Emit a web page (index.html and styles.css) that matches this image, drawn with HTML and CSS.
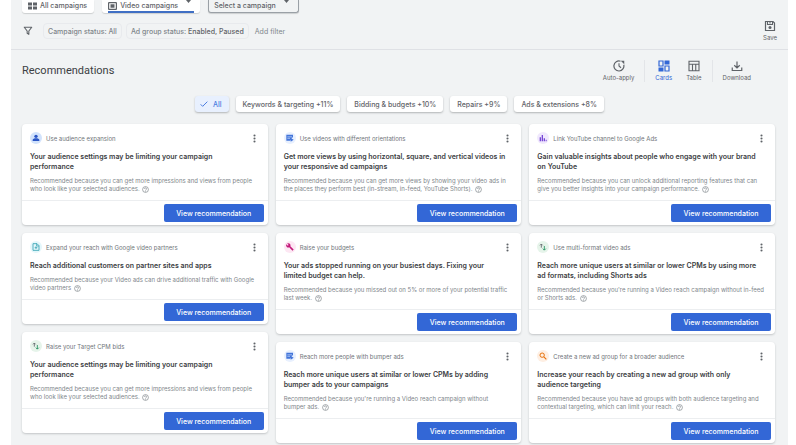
FILE: index.html
```
<!DOCTYPE html>
<html lang="en">
<head>
  <meta charset="UTF-8">
  <meta name="viewport" content="width=device-width, initial-scale=1.0">
  <title>Recommendations</title>
  <link rel="stylesheet" href="styles.css">
</head>
<body>
  <!-- Shared icons -->
  <svg class="sprite" aria-hidden="true">
    <symbol id="i-more" viewBox="0 0 24 24"><circle cx="12" cy="4" r="2.8"/><circle cx="12" cy="12" r="2.8"/><circle cx="12" cy="20" r="2.8"/></symbol>
    <symbol id="i-help" viewBox="0 0 24 24"><g fill="none" stroke="currentColor" stroke-width="2.4"><circle cx="12" cy="12" r="10"/><path d="M8.5 10a3.5 3.5 0 1 1 5.2 3c-1.2.7-1.7 1.2-1.7 2.3"/></g><circle cx="12" cy="17.8" r="1.5"/></symbol>
    <symbol id="i-video" viewBox="0 0 24 24"><path d="M1 2h20v9.5l-2.5-1.5-5.5 10H1z"/><path d="M4 8.5h14M4 13h8" stroke="#d2e3fc" stroke-width="2"/><path d="M14 12l9 5.5-9 5.5z"/></symbol>
    <symbol id="i-bids" viewBox="0 0 24 24"><path d="M7 14V3M3 7l4-4 4 4" fill="none" stroke="#5f6368" stroke-width="2.5"/><path d="M16 9v12M11.5 17l4.5 4.5 4.5-4.5" fill="none" stroke="#1e8e5a" stroke-width="2.5"/></symbol>
  </svg>

  <main class="panel">
    <nav class="tabs" aria-label="Campaigns">
      <button class="tab">
        <svg class="tab-icon" viewBox="0 0 18 16"><path d="M0 1h8v6H0zM10 1h8v6h-8zM0 9h8v6H0zM10 9h8v6h-8z"/></svg>
        All campaigns
      </button>
      <button class="tab tab-active">
        <svg class="tab-icon" viewBox="0 0 18 16"><rect x="1.2" y="1.2" width="15.6" height="13.6" rx="1" fill="none" stroke="currentColor" stroke-width="2.4"/><path d="M5 4.5h8v7H5z"/></svg>
        Video campaigns
        <svg class="tab-arrow" viewBox="0 0 10 6"><path d="M0 0h10L5 6z"/></svg>
      </button>
      <div class="picker">
        <select aria-label="Select a campaign">
          <option>Select a campaign</option>
        </select>
        <svg class="tab-arrow" viewBox="0 0 10 6"><path d="M0 0h10L5 6z"/></svg>
      </div>
    </nav>

    <div class="filters">
      <svg class="filter-icon" viewBox="0 0 24 24"><path d="M3 3h18l-7 9v8l-4-2.5V12z" fill="none" stroke="currentColor" stroke-width="2.6" stroke-linejoin="round"/></svg>
      <button class="filter">Campaign status: All</button>
      <button class="filter">Ad group status: <span>Enabled, Paused</span></button>
      <button class="add-filter">Add filter</button>
      <button class="tool save">
        <svg viewBox="0 0 24 24"><path d="M3 3h15l3 3v15H3z" fill="none" stroke="currentColor" stroke-width="2.4"/><path d="M7 3v6h10V3M12 3v4" fill="none" stroke="currentColor" stroke-width="2.2"/><circle cx="12" cy="15" r="3"/></svg>
        Save
      </button>
    </div>

    <header class="toolbar">
      <h1>Recommendations</h1>
      <div class="tools">
        <button class="tool">
          <svg viewBox="0 0 24 24"><path d="M15 2.5A10 10 0 1 0 21.5 9.5" fill="none" stroke="currentColor" stroke-width="2.4"/><path d="M12 6.5V12l4 3.5" fill="none" stroke="currentColor" stroke-width="2.2"/><path d="M15.5 1.5h7v7z"/></svg>
          Auto-apply
        </button>
        <span class="separator"></span>
        <button class="tool tool-active">
          <svg viewBox="0 0 24 24"><path d="M2 2h8v10H2zM14 12h8v10h-8z" fill="none" stroke="currentColor" stroke-width="2.4"/><path d="M13 1h10v8H13zM1 15h10v8H1z"/></svg>
          Cards
        </button>
        <button class="tool">
          <svg viewBox="0 0 24 24"><path d="M2 2.5h20v19H2zM2 8.5h20M9 8.5v13M15.5 8.5v13" fill="none" stroke="currentColor" stroke-width="2.2"/></svg>
          Table
        </button>
        <span class="separator"></span>
        <button class="tool">
          <svg viewBox="0 0 24 24"><path d="M12 3v13M6.5 10.5 12 16l5.5-5.5M2.5 15v6h19v-6" fill="none" stroke="currentColor" stroke-width="2.4"/></svg>
          Download
        </button>
      </div>
    </header>

    <div class="chips">
      <button class="chip chip-active">
        <svg viewBox="0 0 24 24"><path d="M2 13l6 6L22 5" fill="none" stroke="currentColor" stroke-width="3"/></svg>
        All
      </button>
      <button class="chip">Keywords &amp; targeting +11%</button>
      <button class="chip">Bidding &amp; budgets +10%</button>
      <button class="chip">Repairs +9%</button>
      <button class="chip">Ads &amp; extensions +8%</button>
    </div>

    <section class="cards">
      <div class="column">
        <article class="card">
          <div class="card-head">
            <span class="badge blue"><svg viewBox="0 0 24 24"><circle cx="12" cy="7" r="5"/><path d="M2 21v-3c0-3 5-5 10-5s10 2 10 5v3z"/></svg></span>
            <span class="card-name">Use audience expansion</span>
            <button class="more" aria-label="More options"><svg viewBox="0 0 24 24"><use href="#i-more"/></svg></button>
          </div>
          <h2>Your audience settings may be limiting your campaign performance</h2>
          <p>Recommended because you can get more impressions and views from people who look like your selected audiences. <svg class="help" viewBox="0 0 24 24"><use href="#i-help"/></svg></p>
          <div class="card-foot"><button class="view">View recommendation</button></div>
        </article>

        <article class="card">
          <div class="card-head">
            <span class="badge teal"><svg viewBox="0 0 24 24"><path d="M3 2h12l6 6v14H3z" fill="none" stroke="currentColor" stroke-width="2.6"/><path d="M14 2v7h7M12 10v8M8 14h8" fill="none" stroke="currentColor" stroke-width="2.4"/></svg></span>
            <span class="card-name">Expand your reach with Google video partners</span>
            <button class="more" aria-label="More options"><svg viewBox="0 0 24 24"><use href="#i-more"/></svg></button>
          </div>
          <h2>Reach additional customers on partner sites and apps</h2>
          <p>Recommended because your Video ads can drive additional traffic with Google video partners <svg class="help" viewBox="0 0 24 24"><use href="#i-help"/></svg></p>
          <div class="card-foot"><button class="view">View recommendation</button></div>
        </article>

        <article class="card">
          <div class="card-head">
            <span class="badge green"><svg viewBox="0 0 24 24"><use href="#i-bids"/></svg></span>
            <span class="card-name">Raise your Target CPM bids</span>
            <button class="more" aria-label="More options"><svg viewBox="0 0 24 24"><use href="#i-more"/></svg></button>
          </div>
          <h2>Your audience settings may be limiting your campaign performance</h2>
          <p>Recommended because you can get more impressions and views from people who look like your selected audiences. <svg class="help" viewBox="0 0 24 24"><use href="#i-help"/></svg></p>
          <div class="card-foot"><button class="view">View recommendation</button></div>
        </article>
      </div>

      <div class="column">
        <article class="card">
          <div class="card-head">
            <span class="badge sky"><svg viewBox="0 0 24 24"><use href="#i-video"/></svg></span>
            <span class="card-name">Use videos with different orientations</span>
            <button class="more" aria-label="More options"><svg viewBox="0 0 24 24"><use href="#i-more"/></svg></button>
          </div>
          <h2>Get more views by using horizontal, square, and vertical videos in your responsive ad campaigns</h2>
          <p>Recommended because you can get more views by showing your video ads in the places they perform best (in-stream, in-feed, YouTube Shorts). <svg class="help" viewBox="0 0 24 24"><use href="#i-help"/></svg></p>
          <div class="card-foot"><button class="view">View recommendation</button></div>
        </article>

        <article class="card">
          <div class="card-head">
            <span class="badge pink"><svg viewBox="0 0 24 24"><path d="M23 19.5 13 9.8C14 7 13.5 4.5 11.5 2.5 9 .3 6 .2 3.5 1.5L8 6 5.5 8.5 1 4C-.3 6.5.2 9.5 2.3 11.7c2 2 4.7 2.3 7.2 1.3l10 10z"/></svg></span>
            <span class="card-name">Raise your budgets</span>
            <button class="more" aria-label="More options"><svg viewBox="0 0 24 24"><use href="#i-more"/></svg></button>
          </div>
          <h2>Your ads stopped running on your busiest days. Fixing your limited budget can help.</h2>
          <p>Recommended because you missed out on 5% or more of your potential traffic last week. <svg class="help" viewBox="0 0 24 24"><use href="#i-help"/></svg></p>
          <div class="card-foot"><button class="view">View recommendation</button></div>
        </article>

        <article class="card">
          <div class="card-head">
            <span class="badge sky"><svg viewBox="0 0 24 24"><use href="#i-video"/></svg></span>
            <span class="card-name">Reach more people with bumper ads</span>
            <button class="more" aria-label="More options"><svg viewBox="0 0 24 24"><use href="#i-more"/></svg></button>
          </div>
          <h2>Reach more unique users at similar or lower CPMs by adding bumper ads to your campaigns</h2>
          <p>Recommended because you're running a Video reach campaign without bumper&nbsp;ads. <svg class="help" viewBox="0 0 24 24"><use href="#i-help"/></svg></p>
          <div class="card-foot"><button class="view">View recommendation</button></div>
        </article>
      </div>

      <div class="column">
        <article class="card">
          <div class="card-head">
            <span class="badge purple"><svg viewBox="0 0 24 24"><path d="M2 10h4v12H2zM8 3h4v19H8zM14 13h4v9h-4zM20 17h3v5h-3z"/></svg></span>
            <span class="card-name">Link YouTube channel to Google Ads</span>
            <button class="more" aria-label="More options"><svg viewBox="0 0 24 24"><use href="#i-more"/></svg></button>
          </div>
          <h2>Gain valuable insights about people who engage with your brand on YouTube</h2>
          <p>Recommended because you can unlock additional reporting features that can give you better insights into your campaign performance. <svg class="help" viewBox="0 0 24 24"><use href="#i-help"/></svg></p>
          <div class="card-foot"><button class="view">View recommendation</button></div>
        </article>

        <article class="card">
          <div class="card-head">
            <span class="badge green"><svg viewBox="0 0 24 24"><use href="#i-bids"/></svg></span>
            <span class="card-name">Use multi-format video ads</span>
            <button class="more" aria-label="More options"><svg viewBox="0 0 24 24"><use href="#i-more"/></svg></button>
          </div>
          <h2>Reach more unique users at similar or lower CPMs by using more ad formats, including Shorts ads</h2>
          <p>Recommended because you're running a Video reach campaign without in-feed or Shorts ads. <svg class="help" viewBox="0 0 24 24"><use href="#i-help"/></svg></p>
          <div class="card-foot"><button class="view">View recommendation</button></div>
        </article>

        <article class="card">
          <div class="card-head">
            <span class="badge orange"><svg viewBox="0 0 24 24"><path d="M14.5 14.5 22 22" stroke="currentColor" stroke-width="3.5"/><circle cx="9.5" cy="9.5" r="6.5" fill="none" stroke="currentColor" stroke-width="3"/></svg></span>
            <span class="card-name">Create a new ad group for a broader audience</span>
            <button class="more" aria-label="More options"><svg viewBox="0 0 24 24"><use href="#i-more"/></svg></button>
          </div>
          <h2>Increase your reach by creating a new ad group with only audience targeting</h2>
          <p>Recommended because you have ad groups with both audience targeting and contextual targeting, which can limit your reach. <svg class="help" viewBox="0 0 24 24"><use href="#i-help"/></svg></p>
          <div class="card-foot"><button class="view">View recommendation</button></div>
        </article>
      </div>
    </section>
  </main>
</body>
</html>
```
FILE: styles.css
```
* {
  box-sizing: border-box;
}
body {
  margin: 0;
  background: #fff;
  color: #3c4043;
  font-family: Inter, Roboto, Arial, sans-serif;
  font-size: 7px;
}
button,
select {
  border: none;
  background: none;
  padding: 0;
  color: inherit;
  font: inherit;
  white-space: nowrap;
  cursor: pointer;
}
svg {
  fill: currentColor;
  flex: none;
}
.sprite {
  display: none;
}
.panel {
  min-height: 100vh;
  margin: 0 8px 0 11px;
  background: #f1f3f4;
}

/* Campaign tabs */
.tabs {
  display: flex;
  gap: 8px;
  padding-left: 11px;
}
.tab,
.picker {
  position: relative;
  display: flex;
  align-items: center;
  height: 13px;
  padding: 0 7px 2px 6px;
  border-radius: 0 0 3px 3px;
  background: #fff;
  box-shadow: 0 1px 1px rgba(60, 64, 67, 0.2);
  color: #5f6368;
  font-weight: 500;
}
.tab-icon {
  width: 9px;
  height: 8px;
  margin-right: 3px;
}
.tab-arrow {
  width: 5px;
  height: 3px;
  align-self: flex-start;
  margin-left: 8px;
}
.tab-active {
  padding-right: 9px;
}
.tab-active::after {
  content: "";
  position: absolute;
  left: 6px;
  right: 6px;
  bottom: 0;
  height: 2px;
  background: #3f6fc4;
}
.picker {
  padding: 0 9px 1px 5px;
  border: 1px solid #9aa0a6;
  border-top: none;
  background: #f1f3f4;
}
.picker select {
  appearance: none;
}

/* Filters */
.filters {
  display: flex;
  align-items: center;
  height: 37px;
  padding: 0 11px 0 12px;
  border-bottom: 1px solid #dfe1e5;
  color: #80868b;
  font-weight: 500;
}
.filter-icon {
  width: 10px;
  height: 10px;
  margin-right: 10px;
  color: #5f6368;
}
.filter {
  height: 16px;
  margin-right: 4px;
  padding: 0 4px;
  border: 1px solid #e8eaed;
  border-radius: 4px;
}
.filter span {
  color: #5f6368;
}
.add-filter {
  margin-left: 2px;
  font-weight: 400;
}
.tool {
  display: flex;
  flex-direction: column;
  align-items: center;
  gap: 2px;
  color: #5f6368;
  font-size: 6px;
  line-height: 8px;
}
.tool svg {
  width: 12px;
  height: 12px;
}
.save {
  margin-left: auto;
  font-weight: 400;
}

/* Page title and view tools */
.toolbar {
  display: flex;
  justify-content: space-between;
  align-items: center;
  height: 41px;
  padding: 0 37px 0 11px;
}
h1 {
  margin: 0;
  font-family: Roboto, Arial, sans-serif;
  font-size: 11px;
  font-weight: 400;
}
.tools {
  display: flex;
  align-items: center;
  gap: 10px;
}
.tool-active {
  margin-right: 4px;
  color: #3367d6;
}
.separator {
  width: 1px;
  height: 22px;
  background: #e3e5e8;
}

/* Category chips */
.chips {
  display: flex;
  justify-content: center;
  gap: 7px;
  padding: 5px 0 12px;
}
.chip {
  display: flex;
  align-items: center;
  gap: 5px;
  height: 16px;
  padding: 0 7px;
  border-radius: 3px;
  background: #fff;
  box-shadow: 0 1px 2px rgba(60, 64, 67, 0.35);
  color: #5f6368;
  font-weight: 500;
}
.chip-active {
  padding-left: 5px;
  background: #e8f0fe;
  color: #4a7de0;
}
.chip svg {
  width: 8px;
  height: 8px;
}

/* Recommendation cards */
.cards {
  display: grid;
  grid-template-columns: repeat(3, 1fr);
  gap: 8px;
  padding: 0 13px 0 11px;
}
.column {
  display: flex;
  flex-direction: column;
  gap: 8px;
}
.card {
  padding-top: 8px;
  border-radius: 4px;
  background: #fff;
  box-shadow: 0 1px 2px rgba(60, 64, 67, 0.25);
}
.card-head {
  display: flex;
  align-items: center;
  height: 12px;
  padding: 0 9px 0 8px;
}
.badge {
  display: flex;
  justify-content: center;
  align-items: center;
  width: 12px;
  height: 12px;
  border-radius: 50%;
}
.badge svg {
  width: 8px;
  height: 8px;
}
.blue {
  background: #d2e3fc;
  color: #2a56c6;
}
.sky {
  background: #e8f0fe;
  color: #4274d9;
}
.teal {
  background: #e4f7fb;
  color: #3aa5b5;
}
.green {
  background: #e6f4ea;
}
.pink {
  background: #fde7f3;
  color: #c2187a;
}
.purple {
  background: #f0e8fd;
  color: #7647d6;
}
.orange {
  background: #feefe3;
  color: #e8710a;
}
.card-name {
  margin-left: 4px;
  color: #70757a;
  font-size: 6px;
}
.more {
  display: flex;
  margin-left: auto;
  color: #5f6368;
}
.more svg {
  width: 9px;
  height: 9px;
}
h2 {
  margin: 8px 15px 5px 8px;
  font-size: 7px;
  font-weight: 600;
  line-height: 10px;
}
.card p {
  margin: 0 8px 7px;
  color: #80868b;
  font-size: 6px;
  line-height: 8px;
}
.help {
  width: 7px;
  height: 7px;
  margin-left: 1px;
  vertical-align: middle;
}
.card-foot {
  display: flex;
  justify-content: flex-end;
  padding: 3px 4px;
  border-top: 1px solid #eceef0;
}
.view {
  width: 100px;
  height: 18px;
  border-radius: 2px;
  background: #3367d6;
  color: #fff;
  font-weight: 500;
}
```
